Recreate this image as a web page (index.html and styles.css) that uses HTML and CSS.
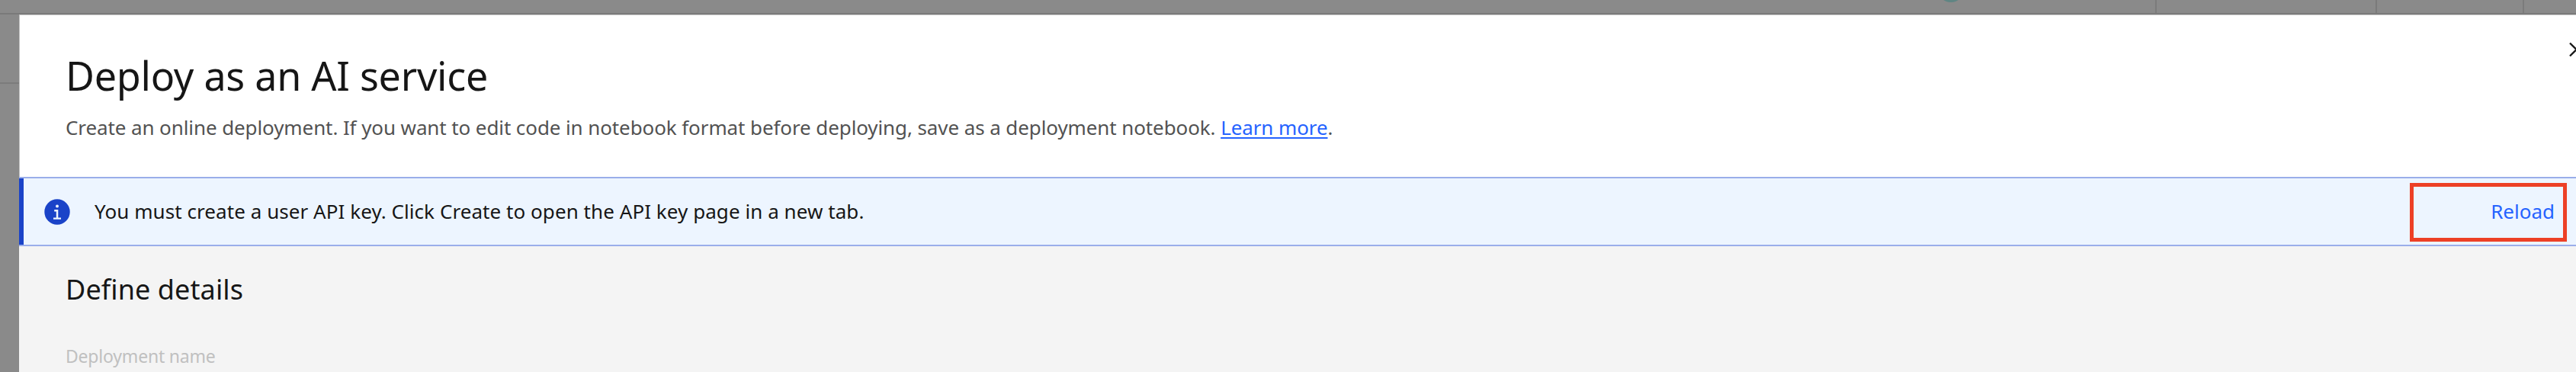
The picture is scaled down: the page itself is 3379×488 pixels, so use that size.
FILE: index.html
```html
<!DOCTYPE html>
<html lang="en">
<head>
<meta charset="utf-8">
<title>Deploy as an AI service</title>
<link rel="stylesheet" href="styles.css">
</head>
<body>
<div class="page">
  <div class="toolbar">
    <span class="status"></span>
    <div class="cell cell-a"></div>
    <div class="cell cell-b"></div>
    <div class="cell cell-c"></div>
  </div>
  <div class="body">
    <div class="rail"></div>
    <main class="modal">
      <header class="modal-header">
        <div class="heading">
          <h1 class="title"><span>Deploy as an AI service</span></h1>
          <p class="subtitle"><span>Create an online deployment. If you want to edit code in notebook format before deploying, save as a deployment notebook. <a class="link" href="#">Learn more</a>.</span></p>
        </div>
        <svg class="close" viewBox="0 0 9 20" aria-label="Close"><path d="M1 1.5 L9.5 10 L1 18.5" fill="none" stroke="#161616" stroke-width="2.3"/></svg>
      </header>
      <section class="notice">
        <svg class="info" viewBox="0 0 34 34"><circle cx="17" cy="17" r="16.7" fill="#1a43c8"/><circle cx="17" cy="9.6" r="2" fill="#edf5ff"/><path d="M13.2 14H18.3V24.4H22V26.8H12V24.4H15.8V16.4H13.2Z" fill="#edf5ff"/></svg>
        <p class="message"><span>You must create a user API key. Click Create to open the API key page in a new tab.</span></p>
        <div class="highlight"><a class="reload" href="#">Reload</a></div>
      </section>
      <section class="details">
        <h2 class="section-title"><span>Define details</span></h2>
        <label class="label"><span>Deployment name</span></label>
      </section>
    </main>
  </div>
</div>
</body>
</html>
```
FILE: styles.css
```css
* { box-sizing: border-box; }
body { margin: 0; font-family: "Noto Sans", sans-serif; color: #161616; background: #8a8a8a; overflow: hidden; }
h1, h2, p { margin: 0; font-weight: 400; white-space: nowrap; }
.page { width: 3379px; height: 488px; display: flex; flex-direction: column; overflow: hidden; }
.toolbar { height: 19px; border-bottom: 2px solid #7a7a7a; display: flex; justify-content: flex-end; overflow: hidden; }
.status { width: 34px; height: 34px; border-radius: 50%; background: #5f8583; margin: -31px 251px 0 0; flex: none; }
.cell { border-left: 2px solid #7b7b7b; height: 17px; }
.cell-a { width: 289px; }
.cell-b { width: 193px; }
.cell-c { width: 70px; }
.body { flex: 1; display: flex; min-height: 0; }
.rail { width: 25px; height: 91px; border-bottom: 2px solid #7c7c7c; }
.modal { flex: 1; display: flex; flex-direction: column; background: #f4f4f4; min-width: 0; }
.modal-header { height: 213px; background: #fff; border-top: 1px solid #c4c4c4; border-left: 1px solid #c4c4c4; display: flex; justify-content: space-between; padding-left: 60px; }
.title { font-size: 52px; line-height: 72px; margin-top: 43px; letter-spacing: -0.25px; }
.subtitle { font-size: 26px; line-height: 36px; margin-top: 14px; color: #525252; letter-spacing: -0.1px; }
.link { color: #2563ff; text-decoration: underline; text-decoration-thickness: 2px; text-underline-offset: 3px; }
.close { width: 9px; height: 20px; margin-top: 35px; }
.notice { height: 91px; background: #edf5ff; border: solid #9aaeea; border-width: 2px 0; display: flex; align-items: center; box-shadow: inset 6px 0 #1a43c8; padding: 0 12px 0 33px; }
.info { width: 34px; height: 34px; }
.message { font-size: 26px; line-height: 36px; margin-left: 32px; padding-bottom: 2px; flex: 1; letter-spacing: 0.06px; }
.highlight { width: 206px; height: 77px; border: 5px solid #ed4026; display: flex; align-items: center; justify-content: flex-end; padding: 0 11px 3px 0; margin-top: 2px; }
.reload { font-size: 26px; line-height: 36px; color: #2563ff; text-decoration: none; }
.details { display: flex; flex-direction: column; padding: 33px 0 0 61px; }
.section-title { font-size: 36px; line-height: 48px; letter-spacing: 0.1px; }
.label { font-size: 23px; line-height: 32px; color: #c0c0c0; margin-top: 47px; letter-spacing: -0.2px; }
```
